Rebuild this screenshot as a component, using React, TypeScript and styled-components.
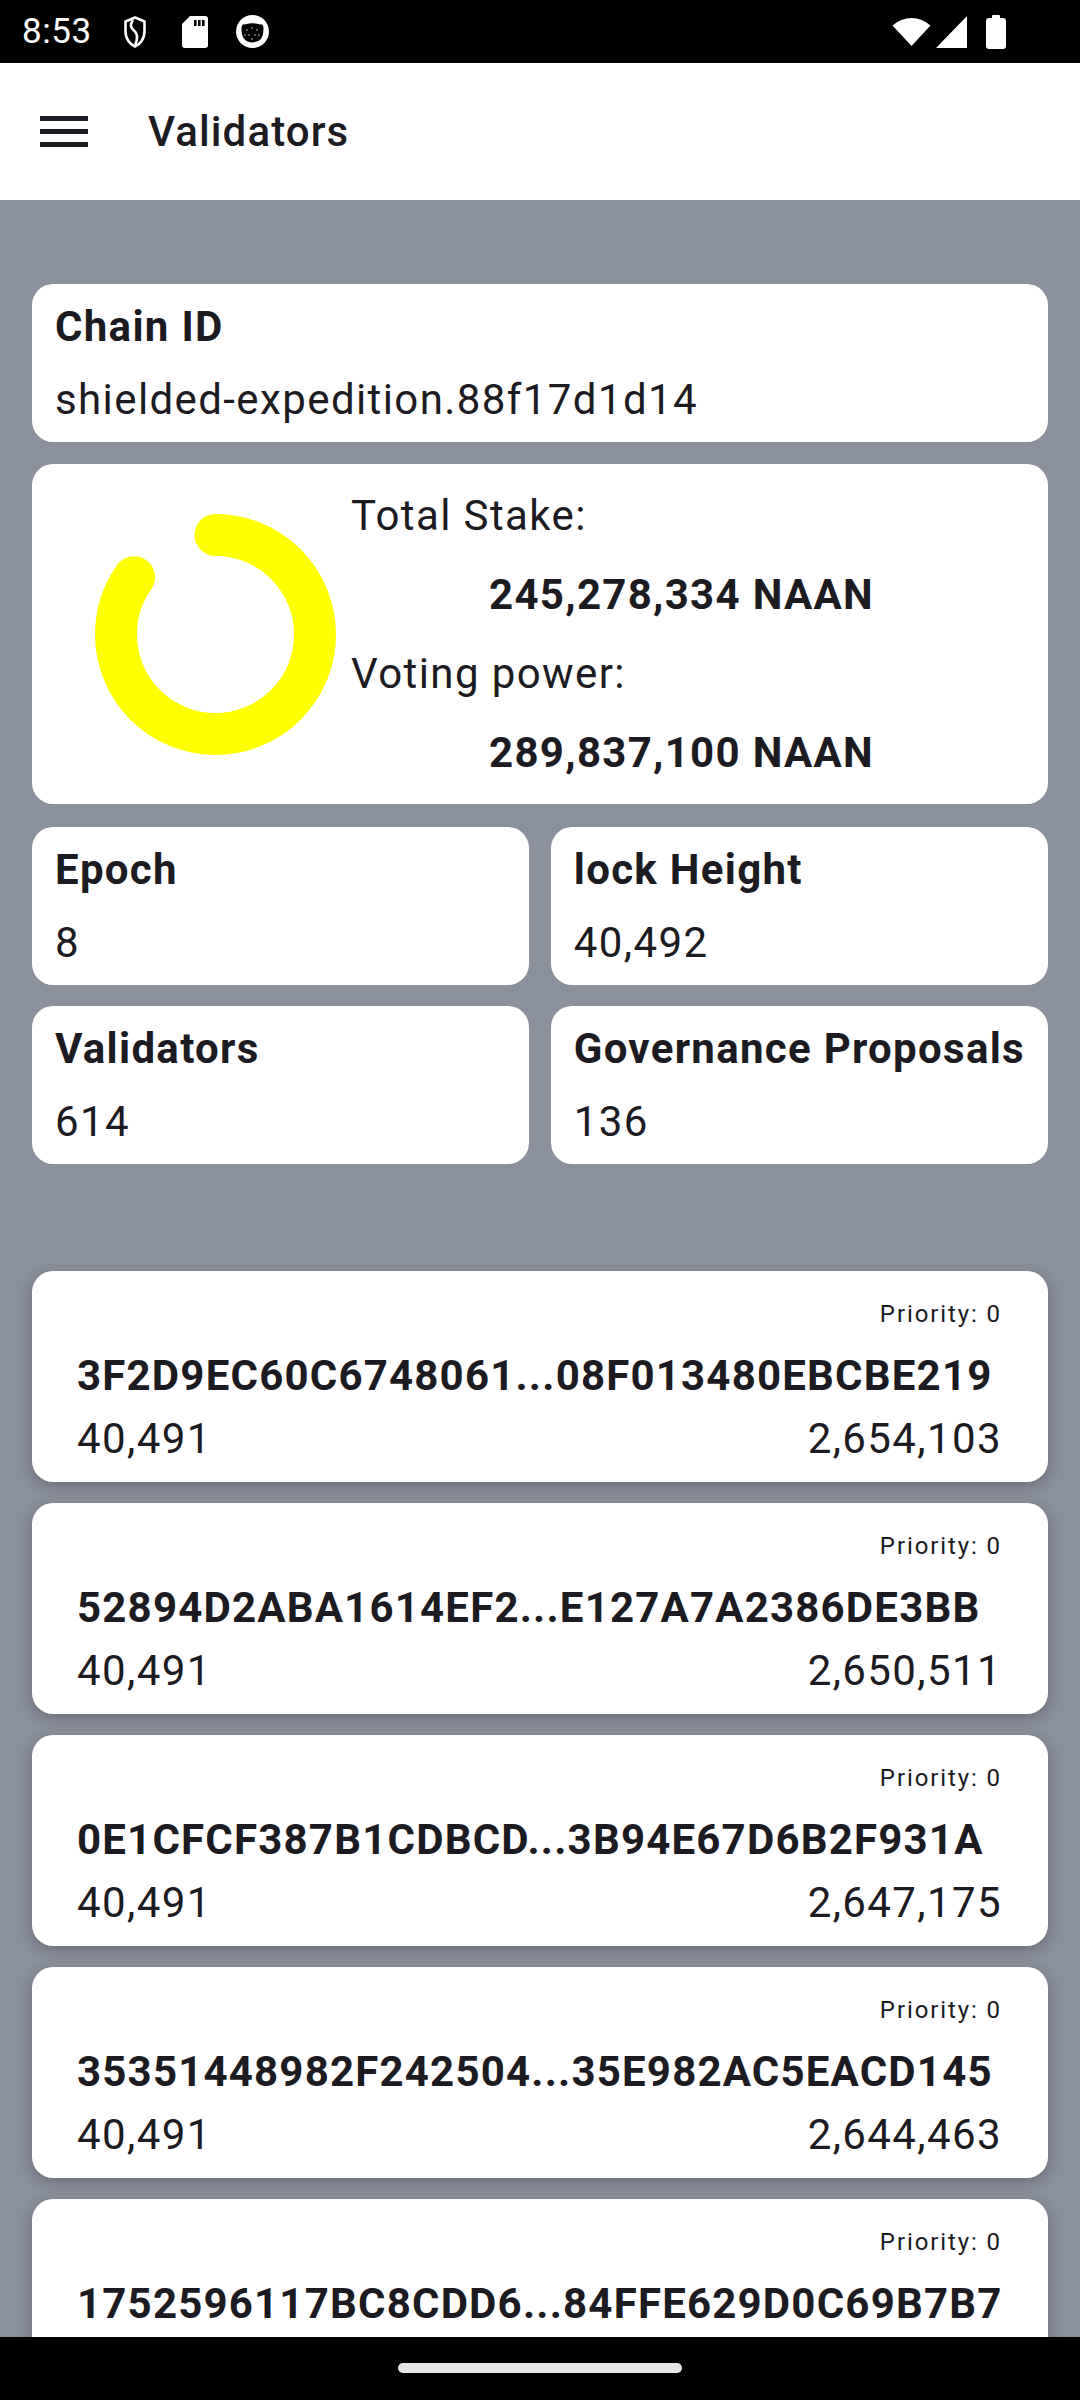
import React from "react";
import styled, { createGlobalStyle } from "styled-components";

const GlobalStyle = createGlobalStyle`
  html, body { margin: 0; padding: 0; background: #000; }
  body { font-family: Roboto, "Noto Sans", Arial, sans-serif; -webkit-font-smoothing: antialiased; }
  #root { width: 1080px; }
  * { box-sizing: border-box; }
`;

const INK = "#1c1b22";

const Screen = styled.div`
  width: 1080px;
  height: 2400px;
  display: flex;
  flex-direction: column;
  overflow: hidden;
  background: #8a909c;
`;

const StatusBar = styled.div`
  height: 63px;
  flex: none;
  background: #000;
  display: flex;
  align-items: center;
  padding: 0 74px 0 22px;
  color: #fff;
`;

const Clock = styled.span`
  font-size: 35px;
  line-height: 41px;
  letter-spacing: 0.6px;
  font-family: Roboto, sans-serif;
  margin-right: 31px;
`;

const StatusIcon = styled.svg<{ $gap?: number }>`
  display: block;
  margin-left: ${(p) => p.$gap ?? 0}px;
  flex: none;
`;

const Spacer = styled.div`
  flex: 1;
`;

const AppBar = styled.div`
  height: 137px;
  flex: none;
  background: #fff;
  display: flex;
  align-items: center;
  padding-left: 40px;
  gap: 60px;
`;

const Title = styled.h1`
  margin: 0;
  font-size: 42px;
  line-height: 49px;
  font-weight: 500;
  letter-spacing: 1.1px;
  color: ${INK};
`;

const Content = styled.main`
  flex: 1;
  overflow: hidden;
  padding: 84px 32px 0;
  display: flex;
  flex-direction: column;
`;

const TopStack = styled.div`
  display: flex;
  flex-direction: column;
  gap: 22px;
`;

const Card = styled.div`
  background: #fff;
  border-radius: 21px;
`;

const InfoCard = styled(Card)`
  padding: 18px 23px;
  display: flex;
  flex-direction: column;
  gap: 24px;
`;

const Label = styled.div`
  font-size: 42px;
  line-height: 49px;
  font-weight: 700;
  letter-spacing: 1.3px;
  color: ${INK};
  white-space: nowrap;
`;

const Value = styled.div`
  font-size: 42px;
  line-height: 49px;
  font-weight: 400;
  letter-spacing: 1.4px;
  color: ${INK};
  white-space: nowrap;
`;

const StakeCard = styled(Card)`
  display: flex;
  align-items: center;
  padding: 27px 36px 27px 63px;
  gap: 15px;
`;

const StakeColumn = styled.div`
  flex: 1;
  display: flex;
  flex-direction: column;
  gap: 30px;
`;

const StakeAmount = styled(Label)`
  align-self: center;
`;

const StatGrid = styled.div`
  display: grid;
  grid-template-columns: 1fr 1fr;
  column-gap: 22px;
  row-gap: 21px;
  margin-top: 1px;
`;

const ValidatorList = styled.div`
  margin-top: 107px;
  display: flex;
  flex-direction: column;
  gap: 21px;
`;

const ValidatorCard = styled(Card)`
  height: 211px;
  flex: none;
  padding: 29px 46px 19px 45px;
  display: flex;
  flex-direction: column;
  box-shadow: 0 4px 14px rgba(20, 22, 30, 0.28);
`;

const Priority = styled.div`
  align-self: flex-end;
  font-size: 24px;
  line-height: 28px;
  letter-spacing: 1.9px;
  color: ${INK};
`;

const Hash = styled(Label)`
  margin-top: 23px;
  letter-spacing: 1.2px;
`;

const NumberRow = styled.div`
  margin-top: 14px;
  display: flex;
  justify-content: space-between;
`;

const NavBar = styled.div`
  height: 63px;
  flex: none;
  background: #000;
  display: flex;
  justify-content: center;
  padding-top: 26px;
`;

const HomePill = styled.div`
  width: 284px;
  height: 10px;
  border-radius: 5px;
  background: #e6e6e6;
`;

const Donut: React.FC<{ ratio: number }> = ({ ratio }) => {
  const r = 99.5;
  const c = 2 * Math.PI * r;
  return (
    <svg width="241" height="241" viewBox="0 0 241 241" style={{ flex: "none" }}>
      <circle
        cx="120.5"
        cy="120.5"
        r={r}
        fill="none"
        stroke="#ffff00"
        strokeWidth="42"
        strokeLinecap="round"
        strokeDasharray={`${c * ratio} ${c}`}
        transform="rotate(-90 120.5 120.5)"
      />
    </svg>
  );
};

const Menu = () => (
  <svg width="48" height="31" viewBox="0 0 48 31">
    <rect x="0" y="0" width="48" height="5" fill={INK} />
    <rect x="0" y="13" width="48" height="5" fill={INK} />
    <rect x="0" y="26" width="48" height="5" fill={INK} />
  </svg>
);

type Validator = { hash: string; height?: string; power?: string };

const validators: Validator[] = [
  { hash: "3F2D9EC60C6748061...08F013480EBCBE219", height: "40,491", power: "2,654,103" },
  { hash: "52894D2ABA1614EF2...E127A7A2386DE3BB", height: "40,491", power: "2,650,511" },
  { hash: "0E1CFCF387B1CDBCD...3B94E67D6B2F931A", height: "40,491", power: "2,647,175" },
  { hash: "35351448982F242504...35E982AC5EACD145", height: "40,491", power: "2,644,463" },
  { hash: "1752596117BC8CDD6...84FFE629D0C69B7B7" },
];

const stats = [
  { label: "Epoch", value: "8" },
  { label: "lock Height", value: "40,492" },
  { label: "Validators", value: "614" },
  { label: "Governance Proposals", value: "136" },
];

export default function App() {
  const stake = 245278334;
  const power = 289837100;
  return (
    <>
      <GlobalStyle />
      <Screen>
        <StatusBar>
          <Clock>8:53</Clock>
          <StatusIcon width="24" height="34" viewBox="0 0 24 34" $gap={0}>
            <path
              d="M12 2.5 L21.5 6.5 V16 C21.5 24 17 29.5 12 31.5 C7 29.5 2.5 24 2.5 16 V6.5 Z"
              fill="none"
              stroke="#fff"
              strokeWidth="2.6"
              strokeLinejoin="round"
            />
            <path
              d="M9.5 6 C6.5 10 8 13 11 15.5 C14.5 18.5 15 23 12.5 29"
              fill="none"
              stroke="#fff"
              strokeWidth="2.6"
              strokeLinecap="round"
            />
          </StatusIcon>
          <StatusIcon width="26" height="32" viewBox="0 0 26 32" $gap={35}>
            <path d="M8 0 H23 A3 3 0 0 1 26 3 V29 A3 3 0 0 1 23 32 H3 A3 3 0 0 1 0 29 V8 Z" fill="#fff" />
            <rect x="12" y="4" width="2.6" height="6" fill="#000" />
            <rect x="16" y="4" width="2.6" height="6" fill="#000" />
            <rect x="20" y="4" width="2.6" height="6" fill="#000" />
          </StatusIcon>
          <StatusIcon width="33" height="33" viewBox="0 0 33 33" $gap={28}>
            <circle cx="16.5" cy="16.5" r="16.5" fill="#fff" />
            <path d="M5.5 13 Q6 8 9 9.5 Q16.5 7 24 9.5 Q27 8 27.5 13 Q28 27 16.5 27.5 Q5 27 5.5 13 Z" fill="#000" />
            <circle cx="11" cy="15" r="1" fill="#777" />
            <circle cx="16" cy="13" r="1" fill="#777" />
            <circle cx="21" cy="15" r="1" fill="#777" />
            <circle cx="13" cy="20" r="1" fill="#777" />
            <circle cx="19" cy="20" r="1" fill="#777" />
            <circle cx="16" cy="24" r="1" fill="#777" />
            <circle cx="9" cy="20" r="0.9" fill="#777" />
            <circle cx="23" cy="20" r="0.9" fill="#777" />
          </StatusIcon>
          <Spacer />
          <StatusIcon width="39" height="28" viewBox="0 0 39 28">
            <path d="M19.5 28 L0.5 7.5 A28 28 0 0 1 38.5 7.5 Z" fill="#fff" />
          </StatusIcon>
          <StatusIcon width="31" height="32" viewBox="0 0 31 32" $gap={5}>
            <path d="M31 0 V32 H0 Z" fill="#fff" />
          </StatusIcon>
          <StatusIcon width="20" height="34" viewBox="0 0 20 34" $gap={19}>
            <rect x="6" y="0" width="8" height="4" rx="1" fill="#fff" />
            <rect x="0" y="3" width="20" height="31" rx="3" fill="#fff" />
          </StatusIcon>
        </StatusBar>

        <AppBar>
          <Menu />
          <Title>Validators</Title>
        </AppBar>

        <Content>
          <TopStack>
            <InfoCard>
              <Label>Chain ID</Label>
              <Value>shielded-expedition.88f17d1d14</Value>
            </InfoCard>

            <StakeCard>
              <Donut ratio={stake / power} />
              <StakeColumn>
                <Value>Total Stake:</Value>
                <StakeAmount>245,278,334 NAAN</StakeAmount>
                <Value>Voting power:</Value>
                <StakeAmount>289,837,100 NAAN</StakeAmount>
              </StakeColumn>
            </StakeCard>

            <StatGrid>
              {stats.map((s) => (
                <InfoCard key={s.label}>
                  <Label>{s.label}</Label>
                  <Value>{s.value}</Value>
                </InfoCard>
              ))}
            </StatGrid>
          </TopStack>

          <ValidatorList>
            {validators.map((v) => (
              <ValidatorCard key={v.hash}>
                <Priority>Priority: 0</Priority>
                <Hash>{v.hash}</Hash>
                {v.height && v.power && (
                  <NumberRow>
                    <Value>{v.height}</Value>
                    <Value>{v.power}</Value>
                  </NumberRow>
                )}
              </ValidatorCard>
            ))}
          </ValidatorList>
        </Content>

        <NavBar>
          <HomePill />
        </NavBar>
      </Screen>
    </>
  );
}
